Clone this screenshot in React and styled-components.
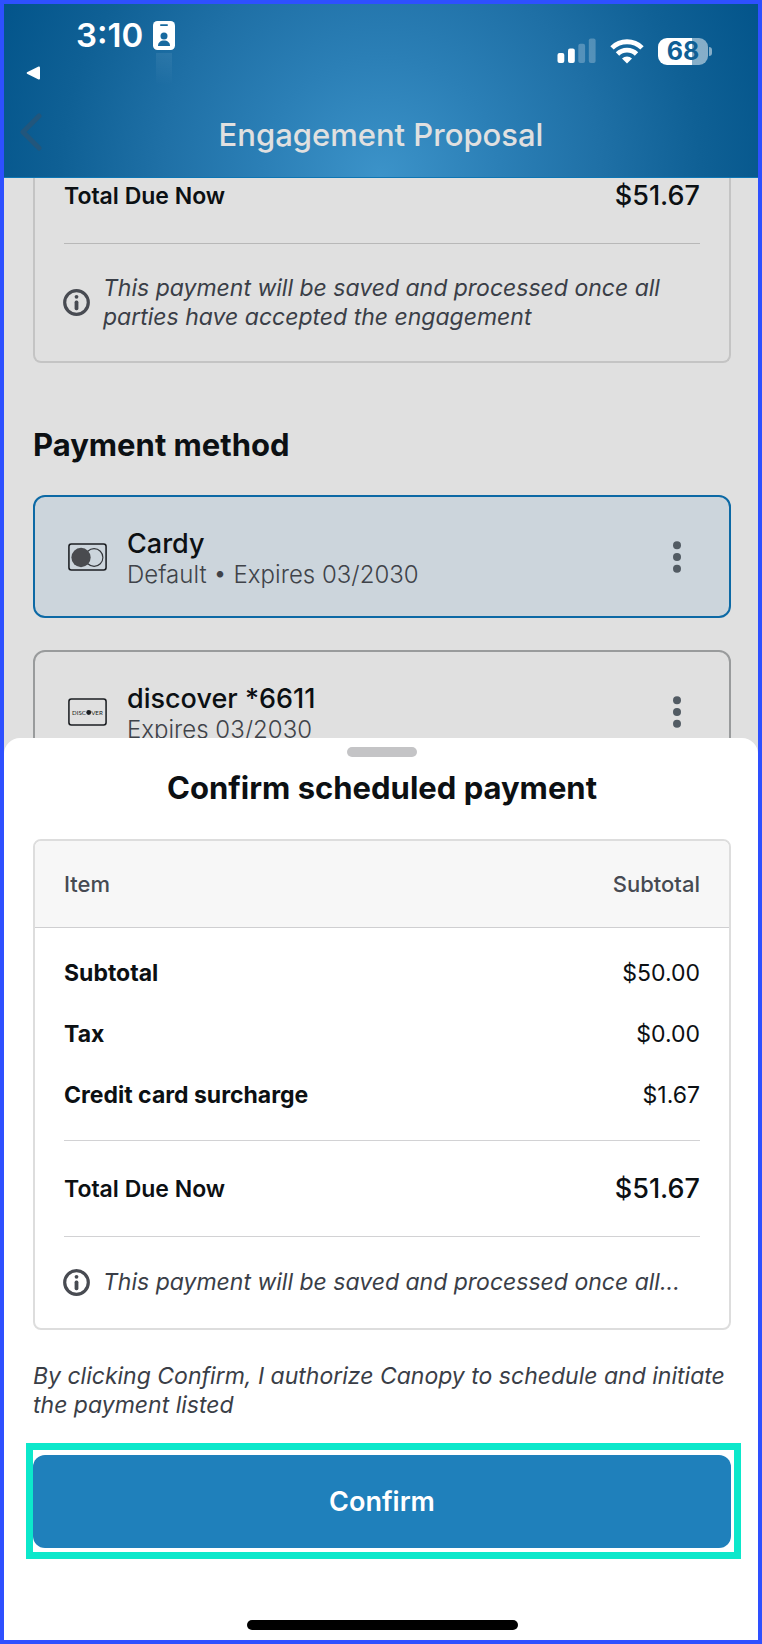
import React from 'react';
import styled, { createGlobalStyle } from 'styled-components';

const colors = {
  frame: '#2e50ff',
  dim: '#e0e0e0',
  white: '#ffffff',
  text: '#0c1013',
  textSub: '#3f4349',
  textNote: '#3a3e47',
  primary: '#1f80bb',
  highlight: '#0ce8cb',
};

const items = [
  { id: 1, name: 'Subtotal', price: '$50.00' },
  { id: 2, name: 'Tax', price: '$0.00' },
  { id: 3, name: 'Credit card surcharge', price: '$1.67' },
];

const cards = [
  { id: 1, brand: 'mastercard', name: 'Cardy', desc: 'Default • Expires 03/2030', selected: true },
  { id: 2, brand: 'discover', name: 'discover *6611', desc: 'Expires 03/2030', selected: false },
];

const InfoIcon = () => (
  <StInfoIcon viewBox='0 0 27 27' aria-hidden='true'>
    <circle cx='13.5' cy='13.5' r='11.8' fill='none' stroke='currentColor' strokeWidth='3.2' />
    <circle cx='13.5' cy='7.8' r='1.9' fill='currentColor' />
    <rect x='11.6' y='11.6' width='3.8' height='9.6' rx='1.6' fill='currentColor' />
  </StInfoIcon>
);

const BrandIcon = ({ brand }) => (
  <svg width='39' height='28' viewBox='0 0 38 27' aria-hidden='true'>
    <rect x='0.9' y='0.9' width='36.2' height='25.2' rx='2.4' fill='none' stroke='#1b1e22' strokeWidth='1.5' />
    {brand === 'mastercard' ? (
      <>
        <circle cx='25.4' cy='14' r='8.6' fill='none' stroke='#33363a' strokeWidth='1.1' />
        <circle cx='12.7' cy='14' r='9.4' fill='#494b4f' />
      </>
    ) : (
      <>
        <text x='4' y='16.2' fontFamily='Lato, sans-serif' fontSize='6' fill='#1b1e22'>
          DISC
        </text>
        <circle cx='20.2' cy='14' r='2.4' fill='#1b1e22' />
        <text x='22.6' y='16.2' fontFamily='Lato, sans-serif' fontSize='6' fill='#1b1e22'>
          VER
        </text>
      </>
    )}
  </svg>
);

const StatusIcons = () => (
  <StStatusIcons>
    <svg width='39' height='26' viewBox='0 0 39 26' fill='#fff' aria-hidden='true'>
      <rect x='0.5' y='15' width='6.8' height='10' rx='2' />
      <rect x='11' y='10.6' width='6.8' height='14.4' rx='2' />
      <rect x='21.3' y='5.8' width='6.8' height='19.2' rx='2' opacity='0.25' />
      <rect x='31.8' y='0.4' width='6.8' height='24.6' rx='2' opacity='0.25' />
    </svg>
    <svg width='34' height='26' viewBox='0 0 34 26' aria-hidden='true'>
      <g fill='none' stroke='#fff' strokeWidth='4.8'>
        <path d='M2 9.9a21.4 21.4 0 0 1 30 0' />
        <path d='M7.5 16a13.4 13.4 0 0 1 19 0' />
      </g>
      <path d='M17 25.4l-5-5a7.2 7.2 0 0 1 10 0z' fill='#fff' />
    </svg>
    <StBattery>68</StBattery>
  </StStatusIcons>
);

const TotalDue = () => (
  <>
    <dt>Total Due Now</dt>
    <dd>$51.67</dd>
  </>
);

const App = () => {
  return (
    <>
      <GlobalStyle />
      <StPhone>
        <StHeader>
          <StStatusBar>
            <div>
              <StTime>
                3:10
                <StBadge>
                  <svg width='22' height='29' viewBox='0 0 22 29' aria-hidden='true'>
                    <rect width='22' height='29' rx='4.5' fill='#fff' />
                    <g fill='#17699f'>
                      <rect x='7' y='3.2' width='8' height='1.8' rx='0.9' />
                      <circle cx='11' cy='15' r='3.5' />
                      <path d='M5 25c0-3.4 2.5-5.4 6-5.4s6 2 6 5.4z' />
                    </g>
                  </svg>
                </StBadge>
              </StTime>
              <StReturn viewBox='0 0 15 14' aria-hidden='true'>
                <path d='M1 6.2L12.6 0.5Q14 0.2 14 1.5v11q0 1.3-1.4 1L1 7.8Q0.3 7 1 6.2z' fill='#fff' />
              </StReturn>
            </div>
            <StatusIcons />
          </StStatusBar>
          <StNav>
            <StBack type='button' aria-label='Back'>
              <svg width='22' height='38' viewBox='0 0 22 38' fill='none' aria-hidden='true'>
                <path d='M19 3L3 19l16 16' stroke='#22567c' strokeWidth='5' strokeLinecap='round' strokeLinejoin='round' />
              </svg>
            </StBack>
            <StNavTitle>Engagement Proposal</StNavTitle>
          </StNav>
        </StHeader>

        <StContent>
          <StSummary>
            <StTotal>
              <TotalDue />
            </StTotal>
            <StNote>
              <InfoIcon />
              <p>This payment will be saved and processed once all parties have accepted the engagement</p>
            </StNote>
          </StSummary>
          <StSection>Payment method</StSection>
          <StCardList>
            {cards.map((card) => (
              <StCard key={card.id} $selected={card.selected}>
                <BrandIcon brand={card.brand} />
                <StCardText>
                  <StCardName>{card.name}</StCardName>
                  <StCardDesc>{card.desc}</StCardDesc>
                </StCardText>
                <StMore type='button' aria-label={`${card.name} options`}>
                  <svg width='8' height='32' viewBox='0 0 8 32' fill='#525b63' aria-hidden='true'>
                    <circle cx='4' cy='4.3' r='4' />
                    <circle cx='4' cy='16' r='4' />
                    <circle cx='4' cy='27.7' r='4' />
                  </svg>
                </StMore>
              </StCard>
            ))}
          </StCardList>
        </StContent>

        <StSheet>
          <StHandle />
          <StSheetTitle>Confirm scheduled payment</StSheetTitle>
          <StInvoice>
            <StTable>
              <thead>
                <StHeadRow>
                  <th>Item</th>
                  <th>Subtotal</th>
                </StHeadRow>
              </thead>
              <StTbody>
                {items.map((item) => (
                  <StRow key={item.id}>
                    <th scope='row'>{item.name}</th>
                    <td>{item.price}</td>
                  </StRow>
                ))}
              </StTbody>
            </StTable>
            <StTotal $line>
              <TotalDue />
            </StTotal>
            <StNote>
              <InfoIcon />
              <p>This payment will be saved and processed once all...</p>
            </StNote>
          </StInvoice>
          <StLegal>By clicking Confirm, I authorize Canopy to schedule and initiate the payment listed</StLegal>
          <StHighlight>
            <StConfirm type='button'>Confirm</StConfirm>
          </StHighlight>
          <StHomeBar />
        </StSheet>
      </StPhone>
    </>
  );
};

export default App;

const GlobalStyle = createGlobalStyle`
  * {
    box-sizing: border-box;
  }
  body, p, h1, h2, ul, dl, dd {
    margin: 0;
    padding: 0;
  }
  body {
    font-family: Inter, 'Liberation Sans', sans-serif;
    color: ${colors.text};
  }
  button {
    font-family: inherit;
    border: 0;
    padding: 0;
    background: none;
    cursor: pointer;
  }
  svg {
    display: block;
    flex-shrink: 0;
  }
`;

const StPhone = styled.div`
  display: flex;
  flex-direction: column;
  height: 100vh;
  border: 4px solid ${colors.frame};
  background-color: ${colors.dim};
  overflow: hidden;
`;

const StHeader = styled.header`
  flex-shrink: 0;
  color: ${colors.white};
  border-bottom: 1px solid #0d76b4;
  background: radial-gradient(circle at 50% 100%, #3c93c9 0, #2b7fb6 120px, #1f70a6 220px, #0f6095 320px, #02548a 420px);
`;

const StStatusBar = styled.div`
  display: flex;
  justify-content: space-between;
  padding: 11px 50px 0 22px;
`;

const StTime = styled.div`
  display: flex;
  align-items: center;
  gap: 10px;
  margin-left: 50px;
  font-size: 33px;
  font-weight: 600;
  line-height: 40px;
`;

const StBadge = styled.span`
  position: relative;

  /* faint trail left under the badge */
  &::after {
    content: '';
    position: absolute;
    top: 32px;
    left: 3px;
    width: 16px;
    height: 32px;
    background: linear-gradient(rgba(255, 255, 255, 0.07), rgba(255, 255, 255, 0));
  }
`;

const StReturn = styled.svg`
  width: 15px;
  height: 14px;
  margin-top: 11px;
`;

const StStatusIcons = styled.div`
  display: flex;
  align-items: center;
  gap: 14px;
  height: 72px;
`;

const StBattery = styled.div`
  position: relative;
  width: 50px;
  height: 27px;
  border-radius: 9px;
  background: linear-gradient(90deg, #ffffff 68%, rgba(255, 255, 255, 0.5) 68%);
  color: #0f5f95;
  font-size: 25px;
  font-weight: 700;
  line-height: 27px;
  text-align: center;

  &::after {
    content: '';
    position: absolute;
    top: 9px;
    right: -4px;
    width: 3px;
    height: 9px;
    border-radius: 0 4px 4px 0;
    background-color: rgba(255, 255, 255, 0.5);
  }
`;

const StNav = styled.div`
  display: grid;
  grid-template-columns: 44px 1fr 44px;
  align-items: center;
  height: 90px;
  padding: 0 16px;
`;

const StBack = styled.button`
  justify-self: start;
`;

const StNavTitle = styled.h1`
  padding-top: 5px;
  color: ${colors.dim};
  font-size: 31px;
  font-weight: 500;
  line-height: 38px;
  text-align: center;
`;

const StContent = styled.main`
  flex: 1 1 0;
  min-height: 0;
  padding: 0 27px 0 29px;
  overflow: hidden;
`;

const StSummary = styled.section`
  border: 2px solid #c4c4c4;
  border-top: 0;
  border-radius: 0 0 8px 8px;
  padding: 0 29px;

  dl {
    height: 66px;
    padding-bottom: 30px;
    border-color: #b8b8b8;
  }

  & > div {
    height: 117px;
  }
`;

const StTotal = styled.dl`
  display: flex;
  justify-content: space-between;
  align-items: center;
  height: ${({ $line }) => ($line ? '97px' : 'auto')};
  border-top: ${({ $line }) => ($line ? '1px' : '0')} solid;
  border-bottom: 1px solid;
  border-color: #d2d2d4;

  dt {
    font-size: 23px;
    font-weight: 600;
  }
  dd {
    font-size: 27px;
    font-weight: 500;
  }
`;

const StNote = styled.div`
  display: flex;
  align-items: center;
  gap: 13px;
  height: 91px;
  margin-left: -1px;
  color: ${colors.textNote};

  p {
    font-size: 23px;
    font-style: italic;
    line-height: 29px;
  }
`;

const StInfoIcon = styled.svg`
  width: 27px;
  height: 27px;
  color: #484b52;
`;

const StSection = styled.h2`
  margin: 63px 0 32px;
  font-size: 31px;
  font-weight: 700;
  line-height: 37px;
`;

const StCardList = styled.ul`
  display: flex;
  flex-direction: column;
  gap: 32px;
  list-style: none;
`;

const StCard = styled.li`
  display: flex;
  align-items: center;
  height: 123px;
  padding: 0 48px 0 33px;
  border: 2px solid ${({ $selected }) => ($selected ? '#0c69a5' : '#999b9c')};
  border-radius: 12px;
  background-color: ${({ $selected }) => ($selected ? '#ccd5dc' : 'transparent')};
`;

const StCardText = styled.div`
  flex: 1;
  margin-left: 20px;
  padding-top: 3px;
`;

const StCardName = styled.p`
  font-size: 27px;
  font-weight: 500;
  line-height: 32px;
`;

const StCardDesc = styled.p`
  color: ${colors.textSub};
  font-size: 24px;
  font-weight: 300;
  line-height: 29px;
`;

const StMore = styled.button`
  padding: 4px 0;
`;

const StSheet = styled.section`
  position: relative;
  flex-shrink: 0;
  display: flex;
  flex-direction: column;
  margin-top: -16px;
  padding: 9px 27px 10px 29px;
  border-radius: 16px 16px 0 0;
  background-color: ${colors.white};
`;

const StHandle = styled.div`
  align-self: center;
  width: 70px;
  height: 10px;
  border-radius: 5px;
  background-color: #c4c4c6;
`;

const StSheetTitle = styled.h2`
  margin: 12px 0 32px;
  font-size: 31px;
  font-weight: 700;
  line-height: 38px;
  text-align: center;
`;

const StInvoice = styled.div`
  border: 2px solid #dddddd;
  border-radius: 8px;
  overflow: hidden;

  & > dl,
  & > div {
    margin-right: 29px;
  }
  & > dl {
    margin-left: 29px;
  }
  & > div {
    margin-left: 28px;
  }
`;

const StTable = styled.table`
  display: block;

  thead {
    display: block;
  }
`;

const StHeadRow = styled.tr`
  display: flex;
  justify-content: space-between;
  align-items: center;
  height: 87px;
  padding: 0 29px;
  border-bottom: 1px solid #cfcfd1;
  background-color: #f7f7f7;
  color: #464a52;
  font-size: 22px;

  th {
    padding: 0;
    font-weight: 500;
  }
`;

const StTbody = styled.tbody`
  display: block;
  padding: 14px 29px 15px;
`;

const StRow = styled.tr`
  display: flex;
  justify-content: space-between;
  align-items: center;
  height: 61px;
  font-size: 23px;

  th,
  td {
    padding: 0;
  }
  th {
    font-weight: 700;
  }
`;

const StLegal = styled.p`
  margin: 32px 0 23px;
  color: ${colors.textNote};
  font-size: 23px;
  font-style: italic;
  line-height: 29px;
`;

const StHighlight = styled.div`
  margin: 0 -10px 0 -7px;
  padding: 5px 3px 4px 0;
  border: 7px solid ${colors.highlight};
`;

const StConfirm = styled.button`
  width: 100%;
  height: 93px;
  border-radius: 12px;
  background-color: ${colors.primary};
  color: ${colors.white};
  font-size: 27px;
  font-weight: 600;
`;

const StHomeBar = styled.div`
  align-self: center;
  width: 271px;
  height: 10px;
  margin-top: 61px;
  border-radius: 5px;
  background-color: #000000;
`;
